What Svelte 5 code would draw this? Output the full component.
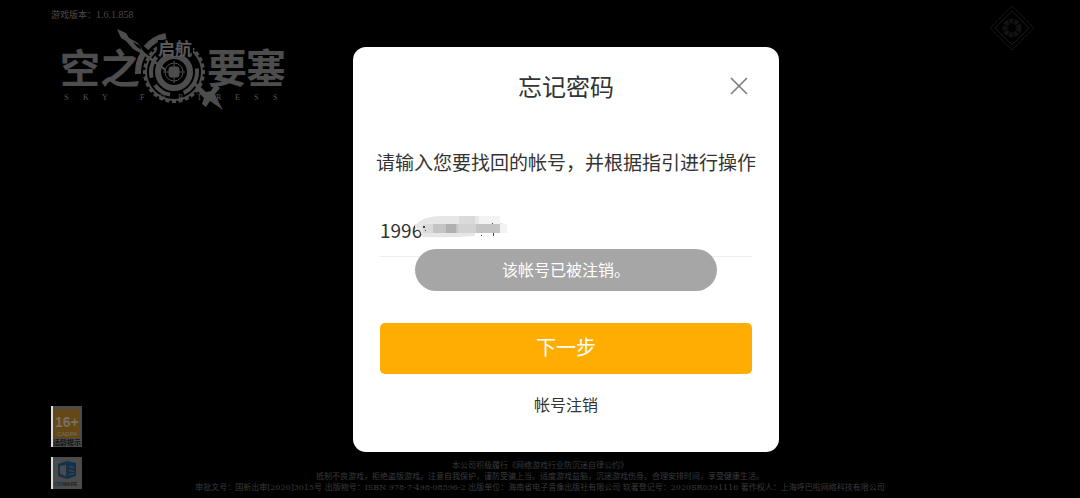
<script lang="ts">
  let account = $state("1996");
  let open = $state(true);

  const version = "1.6.1.858";
  const notices = [
    "本公司积极履行《网络游戏行业防沉迷自律公约》",
    "抵制不良游戏，拒绝盗版游戏。注意自我保护，谨防受骗上当。适度游戏益脑，沉迷游戏伤身。合理安排时间，享受健康生活。",
    "审批文号：国新出审[2020]3015号 出版物号：ISBN 978-7-498-08596-2 出版单位：海南省电子音像出版社有限公司 软著登记号：2020SR0391116 著作权人：上海呼巴啦网络科技有限公司",
  ];

  // Teeth of the gear in the logo
  const teeth = Array.from({ length: 28 }, (_, i) => (i * 360) / 28);
</script>

<div class="game">
  <header class="top">
    <div class="brand">
      <p class="version">游戏版本：<span>{version}</span></p>
      <svg class="logo" width="232" height="84" viewBox="0 0 232 84" role="img" aria-label="空之要塞 启航">
        <g class="logo-main">
          <text x="2" y="56">空</text>
          <text x="42" y="56">之</text>
          <text x="149" y="56">要</text>
          <text x="188" y="56">塞</text>
        </g>
        <!-- Spear behind the gear -->
        <g fill="#4d4d4d">
          <path d="M59 2l9 4 3 5 9 5 6 9 22 17-1 2-23-17-9-5-7-8-5-3z" />
          <path d="M135 56l2-1 11 10 5-1 4-7 5 4-5 6 2 5 6 11-13-9-4 6-4-3 2-6-4-4z" />
        </g>
        <path d="M75 15l6 3 3 5-5-3z" fill="#000" />
        <g fill="none" stroke="#4d4d4d">
          <circle cx="116" cy="45" r="28" stroke-width="2" />
          <circle cx="116" cy="45" r="23" stroke-width="4" stroke-dasharray="26 14 18 8 22 12" />
          <circle cx="116" cy="45" r="16" stroke-width="6" />
          <path d="M80 47a36 36 0 0 1 5-20M88 21a36 36 0 0 1 20-12" stroke-width="6" />
          <circle cx="116" cy="45" r="9" stroke-width="1" />
          <rect x="111" y="40" width="10" height="10" rx="2" fill="#4d4d4d" />
          <path d="M116 34v22M105 45h22" stroke-width="1" />
          {#each teeth as angle}
            <path d="M116 14v3" stroke-width="4" transform="rotate({angle} 116 45)" />
          {/each}
        </g>
        <path d="M100 13h35v16H98z" fill="#000" />
        <text class="logo-sub" x="100" y="28">启航</text>
        <g class="logo-latin">
          {#each "SKY FORTRESS".split("") as letter, i}
            <text x={6 + i * 19} y="73">{letter}</text>
          {/each}
        </g>
      </svg>
    </div>
    <button class="emblem" aria-label="公告">
      <svg width="46" height="46" viewBox="0 0 46 46" fill="none" stroke="#17191b">
        <path d="M23 1l22 22-22 22L1 23z" stroke-dasharray="4 1" />
        <path d="M23 6l17 17-17 17L6 23z" />
        <circle cx="23" cy="23" r="7" stroke="#101214" stroke-width="5" stroke-dasharray="4 1" />
      </svg>
    </button>
  </header>

  <footer class="bottom">
    <div class="badges">
      <svg width="31" height="41" viewBox="0 0 31 41" role="img" aria-label="16+ 适龄提示">
        <path fill="#4b4b4b" d="M0 0h31v41H0z" />
        <path fill="#654817" d="M3 3h26v29H3z" />
        <text x="4" y="21" class="age">16+</text>
        <text x="6" y="30" class="cadpa">CADPA</text>
        <text x="2" y="39" class="age-tip">适龄提示</text>
        <path fill="#ddd" d="M0 0h2v41H0z" />
      </svg>
      <svg width="31" height="32" viewBox="0 0 31 32" role="img" aria-label="CRIWARE">
        <path fill="#4b4b4b" d="M0 0h31v32H0z" />
        <path fill="#14304a" d="M7 7l9-3 9 2v13l-9 3-9-3z" />
        <path fill="#4b4b4b" d="M9 9l6-1v11l-6-2zM18 9l5 1v1l-5-1zM18 13l5 1v1l-5-1zM18 17l5-1v1l-5 1z" />
        <text x="3" y="29" class="cri"><tspan fill="#14304a">CRI</tspan><tspan fill="#222">WARE</tspan></text>
        <path fill="#ddd" d="M0 0h2v32H0z" />
      </svg>
    </div>
    <div class="notices">
      {#each notices as notice}
        <p>{notice}</p>
      {/each}
    </div>
  </footer>
</div>

{#if open}
  <div class="overlay">
    <div class="dialog" role="dialog" aria-labelledby="dialog-title">
      <div class="dialog-header">
        <h1 id="dialog-title">忘记密码</h1>
        <button class="close" aria-label="关闭" onclick={() => (open = false)}>
          <svg width="18" height="18" viewBox="0 0 18 18" fill="none" stroke="#777" stroke-width="1.5"><path d="M1 1l16 16M17 1L1 17" /></svg>
        </button>
      </div>

      <label class="hint" for="account">请输入您要找回的帐号，并根据指引进行操作</label>

      <div class="field">
        <input id="account" type="text" bind:value={account} />
        <svg class="mask" width="94" height="24" viewBox="0 0 94 24" aria-hidden="true">
          <path fill="#e6e6e6" d="M0 10Q8 1 27 1h58v7h3v10H60v3q-24 2-52 1L5 16l-5-4z" />
          <path fill="#f3f3f3" d="M64 1h21v8H64zM84 9h8v9h-8z" />
          <path fill="#dadada" d="M44 1h16v8H44zM8 9h10v9H8z" />
          <path fill="#c4c4c4" d="M18 9h25v9H18zM61 9h24v9H61z" />
          <path fill="#b0b0b0" d="M31 9h10v9H31z" />
          <path fill="#d2d2d2" d="M43 9h18v9H43z" />
          <path fill="#444" d="M8 11h2v2H8zM10 15h1v1h-1zM66 20h1v1h-1zM77 8h1v1h-1zM78 18h1v3h-1z" />
        </svg>
        <div class="toast" role="status">该帐号已被注销。</div>
      </div>

      <button class="next">下一步</button>
      <a class="cancel" href="#cancel">帐号注销</a>
    </div>
  </div>
{/if}

<style>
  :global(body) {
    background: #000;
    font-family: "Noto Sans CJK SC", sans-serif;
  }

  p,
  h1 {
    margin: 0;
  }

  button {
    border: none;
    padding: 0;
    background: transparent;
    font-family: inherit;
    cursor: pointer;
  }

  svg {
    display: block;
  }

  /* Game screen */

  .game {
    min-height: 100vh;
    display: flex;
    flex-direction: column;
    justify-content: space-between;
    overflow: hidden;
  }

  .top {
    display: flex;
    justify-content: space-between;
    align-items: flex-start;
    padding: 5px 45px 0 51px;
  }

  .version {
    height: 20px;
    line-height: 20px;
    font-size: 9px;
    color: #4a4a4a;
  }

  .version span {
    font: 10px "Liberation Serif", serif;
  }

  .logo {
    margin: 2px 0 0 7px;
  }

  .logo-main {
    font: 700 40px "Noto Sans CJK SC", sans-serif;
    fill: #4d4d4d;
  }

  .logo-sub {
    font: 700 17px "Noto Sans CJK SC", sans-serif;
    fill: #5a5a5a;
  }

  .logo-latin {
    font: 8px "Liberation Serif", serif;
    fill: #555;
  }

  .bottom {
    display: grid;
    grid-template-columns: 1fr auto 1fr;
    align-items: end;
    padding-bottom: 5px;
  }

  .badges {
    display: flex;
    flex-direction: column;
    gap: 10px;
    padding: 0 0 4px 51px;
  }

  .age {
    font: 700 14px "Liberation Sans", sans-serif;
    fill: #7b7163;
  }

  .cadpa {
    font: 6px "Liberation Sans", sans-serif;
    fill: #7b7163;
  }

  .age-tip {
    font: 700 7px "Noto Sans CJK SC", sans-serif;
    fill: #111;
  }

  .cri {
    font: 700 5px "Liberation Sans", sans-serif;
  }

  .notices {
    font-family: "DejaVu Serif", "Noto Sans CJK SC", serif;
    font-size: 8px;
    line-height: 11px;
    text-align: center;
    white-space: nowrap;
    color: #3a3a3a;
  }

  /* Dialog */

  .overlay {
    position: fixed;
    inset: 0 0 0 52px;
    display: flex;
    align-items: center;
    justify-content: center;
  }

  .dialog {
    box-sizing: border-box;
    width: 100%;
    max-width: 426px;
    padding: 0 27px 36px;
    display: flex;
    flex-direction: column;
    background: #fff;
    border-radius: 13px;
    color: #333;
  }

  .dialog-header {
    display: grid;
    grid-template-columns: 1fr auto 1fr;
    align-items: center;
    height: 78px;
  }

  h1 {
    grid-column: 2;
    font-size: 24px;
    font-weight: 400;
  }

  .close {
    justify-self: end;
    padding: 4px;
  }

  .hint {
    margin: 23px -4px 0;
    font-size: 19px;
    line-height: 28px;
    text-align: center;
    white-space: nowrap;
  }

  .field {
    position: relative;
    margin-top: 28px;
  }

  input {
    box-sizing: border-box;
    display: block;
    width: 100%;
    height: 53px;
    padding: 0;
    border: none;
    border-bottom: 1px solid #eee;
    outline: none;
    background: transparent;
    color: #333;
    font: 19px "Noto Sans CJK SC", sans-serif;
  }

  .mask {
    position: absolute;
    top: 11px;
    left: 35px;
  }

  .toast {
    position: absolute;
    top: 45px;
    left: 35px;
    right: 35px;
    padding-bottom: 2px;
    border-radius: 22px;
    background: #a6a6a6;
    color: #fff;
    font-size: 16px;
    line-height: 40px;
    text-align: center;
  }

  .next {
    height: 51px;
    margin-top: 66px;
    padding-bottom: 3px;
    border-radius: 5px;
    background: #ffad03;
    color: #fff;
    font-size: 20px;
  }

  .cancel {
    align-self: center;
    margin-top: 18px;
    font-size: 16px;
    line-height: 24px;
    color: #333;
    text-decoration: none;
  }
</style>
